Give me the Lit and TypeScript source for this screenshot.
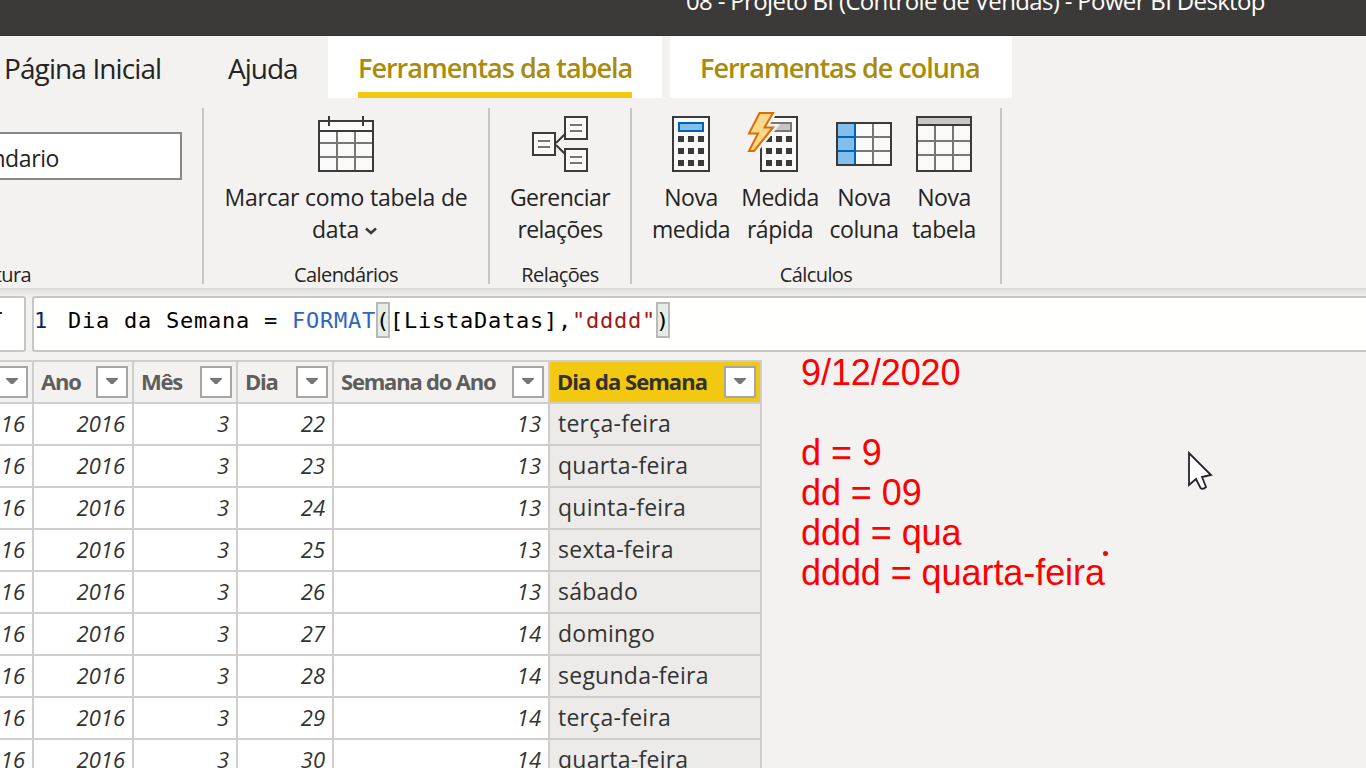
import { LitElement, html, css, svg } from "lit";
import { customElement } from "lit/decorators.js";

const DARK = "#3b3a39";
const GRAY = "#797774";
const PAPER = "#fafafa";
const BLUE = "#0063b1";
const SKY = "#83beec";

// Ribbon icons share a 60x64 box; bars are solid rects so the edges stay crisp.
const bar = (x: number, y: number, w: number, h: number, c: string) =>
  svg`<rect x=${x} y=${y} width=${w} height=${h} fill=${c}></rect>`;
const frame = (x: number, y: number, w: number, h: number, c = DARK, f = PAPER) =>
  svg`${bar(x, y, w, h, c)}${bar(x + 2, y + 2, w - 4, h - 4, f)}`;
const keys = (x: number) =>
  [26, 38, 50].map((y) => [0, 10, 20].map((d) => bar(x + d, y, 6, 6, DARK)));
const icon = (body: unknown) =>
  html`<svg class="icon" viewBox="0 0 60 64" shape-rendering="crispEdges">${body}</svg>`;

const calendarIcon = icon(svg`
  ${frame(2, 10, 56, 52)}
  ${bar(2, 20, 56, 2, DARK)}${bar(12, 6, 2, 10, DARK)}${bar(46, 6, 2, 10, DARK)}
  ${bar(20, 22, 2, 38, GRAY)}${bar(38, 22, 2, 38, GRAY)}
  ${bar(4, 32, 52, 2, GRAY)}${bar(4, 46, 52, 2, GRAY)}`);

const card = (x: number, y: number) =>
  svg`${frame(x, y, 24, 24)}${bar(x + 6, y + 8, 12, 2, GRAY)}${bar(x + 6, y + 14, 12, 2, GRAY)}`;
const relationsIcon = icon(svg`
  <path d="M26 33L36 23M26 35L36 45" stroke=${DARK} stroke-width="2" shape-rendering="auto"></path>
  ${card(2, 22)}${card(34, 6)}${card(34, 38)}`);

const measureIcon = icon(svg`
  ${frame(11, 6, 38, 56)}${frame(17, 12, 26, 10, BLUE, SKY)}${keys(17)}`);

const quickIcon = icon(svg`
  ${frame(10, 6, 38, 56)}${frame(16, 12, 26, 10, GRAY, "#c8c6c4")}${keys(16)}
  <path d="M9 3H23L14 17.500H23L4 41H-1L7 24H-1Z" fill="#f3f2f1" stroke="#f3f2f1" stroke-width="7" shape-rendering="auto"></path>
  <path d="M9.500 3H23L14.500 17.500H23L4 41H-1L8 23.500H-1Z" fill="#fad98b" stroke="#e06c00" stroke-width="2" shape-rendering="auto"></path>`);

const columnIcon = icon(svg`
  ${frame(2, 12, 56, 44)}${bar(4, 14, 16, 40, SKY)}
  ${bar(38, 14, 2, 40, GRAY)}${bar(22, 26, 34, 2, GRAY)}${bar(22, 40, 34, 2, GRAY)}
  ${bar(20, 14, 2, 40, BLUE)}${bar(4, 26, 16, 2, BLUE)}${bar(4, 40, 16, 2, BLUE)}`);

const tableIcon = icon(svg`
  ${frame(2, 6, 56, 56)}${bar(4, 8, 52, 6, "#c8c6c4")}${bar(2, 14, 56, 2, DARK)}
  ${bar(20, 16, 2, 44, GRAY)}${bar(38, 16, 2, 44, GRAY)}
  ${bar(4, 30, 52, 2, GRAY)}${bar(4, 44, 52, 2, GRAY)}`);

const columns = [
  { name: "", cls: "c0" },
  { name: "Ano", cls: "c1" },
  { name: "Mês", cls: "c2" },
  { name: "Dia", cls: "c3" },
  { name: "Semana do Ano", cls: "c4" },
  { name: "Dia da Semana", cls: "c5" },
];

const rows = [
  ["16", "2016", "3", "22", "13", "terça-feira"],
  ["16", "2016", "3", "23", "13", "quarta-feira"],
  ["16", "2016", "3", "24", "13", "quinta-feira"],
  ["16", "2016", "3", "25", "13", "sexta-feira"],
  ["16", "2016", "3", "26", "13", "sábado"],
  ["16", "2016", "3", "27", "14", "domingo"],
  ["16", "2016", "3", "28", "14", "segunda-feira"],
  ["16", "2016", "3", "29", "14", "terça-feira"],
  ["16", "2016", "3", "30", "14", "quarta-feira"],
];

@customElement("app-root")
export class AppRoot extends LitElement {
  static styles = css`
    * { box-sizing: border-box; }
    :host {
      display: flex; flex-direction: column; position: relative;
      width: 1366px; height: 768px; overflow: hidden;
      background: #f3f2f1; color: #252423;
      font-family: "Open Sans", "Noto Sans", sans-serif; white-space: nowrap;
    }
    svg { display: block; }
    .title { flex: none; height: 36px; background: #3b3a38; border-bottom: 1px solid #32312f; color: #fff; padding-left: 686px; }
    .title span { display: block; margin-top: -17px; line-height: 36px; font-size: 24px; letter-spacing: -0.66px; }
    .tabs { flex: none; display: flex; height: 62px; font-size: 28px; line-height: 64px; }
    .tab { height: 62px; }
    .home { width: 228px; padding-left: 4px; letter-spacing: -0.9px; }
    .help { width: 100px; letter-spacing: -1px; }
    .ctx { background: #fff; color: #a98b0d; font-size: 27px; font-weight: 600; letter-spacing: -1px; padding: 0 30px; }
    .t1 { width: 334px; margin-right: 8px; }
    .t2 { width: 342px; }
    .t1 span { display: block; height: 62px; border-bottom: 6px solid #f2c811; }
    .ribbon { flex: none; display: flex; height: 190px; padding: 10px 0 4px; }
    .group { display: flex; flex-direction: column; height: 176px; border-right: 2px solid #c8c6c4; }
    .g0 { width: 204px; } .g1 { width: 286px; } .g2 { width: 142px; } .g3 { width: 370px; }
    .body { flex: none; display: flex; justify-content: center; height: 152px; padding-top: 2px; }
    .g3 .body { justify-content: flex-start; gap: 4px; padding-left: 17px; }
    .label { flex: none; font-size: 20px; line-height: 30px; text-align: center; letter-spacing: -0.6px; }
    .g0 .label { width: 31px; display: flex; justify-content: flex-end; }
    .g0 .body { justify-content: flex-start; padding-top: 24px; }
    .name { width: 182px; height: 48px; border: 2px solid #8a8886; border-left: 0; background: #fff; font-size: 23px; line-height: 48px; }
    .name span { display: flex; justify-content: flex-end; width: 59px; letter-spacing: -0.4px; }
    .btn { display: flex; flex-direction: column; align-items: center; font-size: 23px; line-height: 32px; text-align: center; letter-spacing: -0.45px; }
    .g1 .btn { letter-spacing: -0.22px; }
    .g2 .btn { letter-spacing: -0.55px; }
    .icon { width: 60px; height: 64px; margin-bottom: 7px; overflow: visible; flex: none; }
    .b1 { width: 84px; } .b2 { width: 86px; } .b3 { width: 74px; } .b4 { width: 78px; }
    .line { display: flex; align-items: center; justify-content: center; padding-right: 3px; }
    .chev { margin: 4px 0 0 6px; }
    .shade { flex: none; height: 8px; background: linear-gradient(#d8d7d6, #e4e3e2 30%, #f0efee); }
    .formula { flex: none; display: flex; height: 56px; gap: 6px; }
    .tool { width: 26px; border: 2px solid #c8c6c4; border-left: 0; border-radius: 0 3px 3px 0; background: #fff; padding-top: 14px; }
    .tool i { display: block; width: 2px; height: 2px; background: #252423; }
    .code { flex: 1; display: flex; border: 2px solid #c8c6c4; border-right: 0; border-radius: 3px 0 0 3px; background: #fffffe; color: #000;
      font: 22px/38px "DejaVu Sans Mono", monospace; letter-spacing: 0.755px; padding-top: 4px; white-space: pre; }
    .no { width: 34px; color: #0b216f; }
    .fn { color: #3165bb; }
    .str { color: #a31515; }
    .par { width: 14px; height: 36px; background: #e4eee4; box-shadow: inset 0 0 0 2px #b9b9b9; }
    .work { flex: 1; display: flex; margin-top: 8px; min-height: 0; }
    .grid { width: 762px; flex: none; border-top: 2px solid #d0cecd; }
    .row { display: flex; height: 42px; background: #fff; font-size: 22px; line-height: 39px; color: #333; }
    .cell { height: 42px; border-right: 2px solid #d0cecd; border-bottom: 2px solid #d0cecd; text-align: right; padding-right: 7px; font-style: italic; }
    .c0 { width: 34px; display: flex; justify-content: flex-end; }
    .c1 { width: 100px; } .c2 { width: 104px; } .c3 { width: 96px; } .c4 { width: 216px; } .c5 { width: 212px; }
    .row .c5 { background: #ecebe9; text-align: left; font-style: normal; padding-left: 8px; font-size: 23px; letter-spacing: 0.25px; }
    .head { background: #f3f2f1; font-weight: 700; color: #605e5c; }
    .head .cell { display: flex; justify-content: space-between; align-items: center; font-style: normal; padding: 0 4px 0 7px; letter-spacing: -1.2px; }
    .head .cell span { margin-top: -2px; }
    .head .c0 { justify-content: flex-end; padding-left: 0; }
    .head .c5 { background: #f2c811; color: #323130; font-size: 22px; letter-spacing: -0.98px; }
    .drop { flex: none; width: 32px; height: 32px; border: 2px solid #a6a6a6; background: #fff; padding: 10px 8px; }
    .notes { padding-left: 39px; color: #f00; font: 36px/40px "Liberation Sans", sans-serif; letter-spacing: -0.07px; margin-top: -7px; }
    .note { height: 40px; }
    .cursor { position: absolute; left: 1187px; top: 451px; }
    .dot { position: absolute; left: 1103px; top: 551px; width: 5px; height: 5px; border-radius: 50%; background: #f00; }
  `;

  render() {
    return html`
      <header class="title"><span>08 - Projeto BI (Controle de Vendas) - Power BI Desktop</span></header>
      <nav class="tabs">
        <div class="tab home">Página Inicial</div>
        <div class="tab help">Ajuda</div>
        <div class="tab ctx t1"><span>Ferramentas da tabela</span></div>
        <div class="tab ctx t2">Ferramentas de coluna</div>
      </nav>
      <section class="ribbon">
        <div class="group g0">
          <div class="body"><div class="name"><span>ndario</span></div></div>
          <div class="label">tura</div>
        </div>
        <div class="group g1">
          <div class="body"><div class="btn">${calendarIcon}
            <div>Marcar como tabela de</div>
            <div class="line">data<svg class="chev" width="12" height="8"><path d="M1 1.500L6 6L11 1.500" fill="none" stroke="#3b3a39" stroke-width="2.500"></path></svg></div>
          </div></div>
          <div class="label">Calendários</div>
        </div>
        <div class="group g2">
          <div class="body"><div class="btn">${relationsIcon}<div>Gerenciar</div><div>relações</div></div></div>
          <div class="label">Relações</div>
        </div>
        <div class="group g3">
          <div class="body">
            <div class="btn b1">${measureIcon}<div>Nova</div><div>medida</div></div>
            <div class="btn b2">${quickIcon}<div>Medida</div><div>rápida</div></div>
            <div class="btn b3">${columnIcon}<div>Nova</div><div>coluna</div></div>
            <div class="btn b4">${tableIcon}<div>Nova</div><div>tabela</div></div>
          </div>
          <div class="label">Cálculos</div>
        </div>
      </section>
      <div class="shade"></div>
      <section class="formula">
        <div class="tool"><i></i></div>
        <div class="code"><span class="no">1</span><span>Dia da Semana = </span><span class="fn">FORMAT</span><span class="par">(</span><span>[ListaDatas],</span><span class="str">"dddd"</span><span class="par">)</span></div>
      </section>
      <main class="work">
        <div class="grid">
          <div class="row head">${columns.map((c) => html`
            <div class="cell ${c.cls}"><span>${c.name}</span><div class="drop"><svg width="12" height="6"><path d="M0 0H12V1L7 6H5L0 1Z" fill="#797774"></path></svg></div></div>`)}
          </div>
          ${rows.map((r) => html`<div class="row">${r.map((v, i) => html`<div class="cell ${columns[i].cls}">${v}</div>`)}</div>`)}
        </div>
        <div class="notes">
          ${["9/12/2020", "", "d = 9", "dd = 09", "ddd = qua", "dddd = quarta-feira"].map((t) => html`<div class="note">${t}</div>`)}
        </div>
      </main>
      <div class="dot"></div>
      <svg class="cursor" width="26" height="40"><path d="M2 2V34L9 28L13.500 37Q16 39 19 36L15 26L24 24Z" fill="#fff" stroke="#23222e" stroke-width="1.800"></path></svg>
    `;
  }
}
